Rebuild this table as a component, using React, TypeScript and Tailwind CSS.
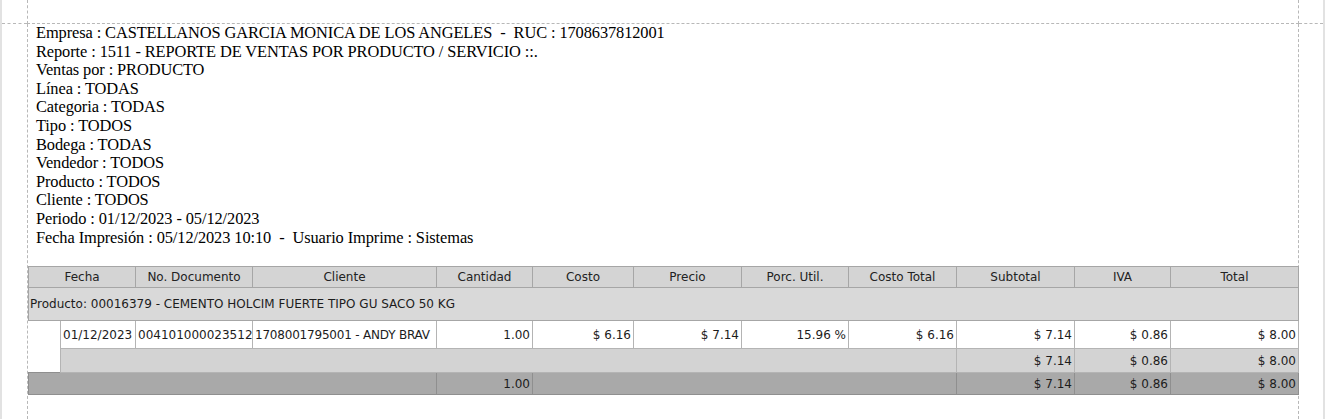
const cols = [32, 75, 117, 184, 96, 101, 108, 107, 108, 118, 96, 128]

const headerLines = [
  'Empresa : CASTELLANOS GARCIA MONICA DE LOS ANGELES  -  RUC : 1708637812001',
  'Reporte : 1511 - REPORTE DE VENTAS POR PRODUCTO / SERVICIO ::.',
  'Ventas por : PRODUCTO',
  'Línea : TODAS',
  'Categoria : TODAS',
  'Tipo : TODOS',
  'Bodega : TODAS',
  'Vendedor : TODOS',
  'Producto : TODOS',
  'Cliente : TODOS',
  'Periodo : 01/12/2023 - 05/12/2023',
  'Fecha Impresión : 05/12/2023 10:10  -  Usuario Imprime : Sistemas',
]

const headers = ['No. Documento', 'Cliente', 'Cantidad', 'Costo', 'Precio', 'Porc. Util.', 'Costo Total', 'Subtotal', 'IVA', 'Total']

const th = 'border border-[#a6a6a6] bg-[#d4d4d4] p-0 text-center font-normal text-[#222]'
const tdNum = 'border border-[#b4b4b4] bg-white px-[2px] py-0 text-right'
const tdText = 'whitespace-nowrap border border-[#b4b4b4] bg-white px-[2px] py-0 text-left'

function ReportHeader() {
  return (
    <div
      className="whitespace-pre pl-[8px] text-[16.4px] leading-[18.6px] tracking-[-0.1px] text-black"
      style={{ fontFamily: '"Liberation Serif", "Times New Roman", serif' }}
    >
      {headerLines.map((l) => (
        <div key={l}>{l}</div>
      ))}
    </div>
  )
}

function ReportTable() {
  return (
    <table
      className="w-[1270px] table-fixed border-collapse text-[12px] text-[#1c1c1c]"
      style={{ fontFamily: '"DejaVu Sans", Tahoma, sans-serif' }}
    >
      <colgroup>
        {cols.map((w, i) => (
          <col key={i} style={{ width: w }} />
        ))}
      </colgroup>
      <tbody>
        <tr className="h-[21px]">
          <td colSpan={2} className={th}>
            Fecha
          </td>
          {headers.map((h) => (
            <td key={h} className={th}>
              {h}
            </td>
          ))}
        </tr>
        <tr className="h-[33px]">
          <td colSpan={12} className="border border-[#a6a6a6] bg-[#d9d9d9] p-0 pl-px text-left">
            Producto: 00016379 - CEMENTO HOLCIM FUERTE TIPO GU SACO 50 KG
          </td>
        </tr>
        <tr className="h-[28px]">
          <td rowSpan={2} className="bg-white p-0" />
          <td className={tdText}>01/12/2023</td>
          <td className={tdText}>004101000023512</td>
          <td className={tdText + ' tracking-[-0.2px]'}>1708001795001 - ANDY BRAV</td>
          <td className={tdNum}>1.00</td>
          <td className={tdNum}>$ 6.16</td>
          <td className={tdNum}>$ 7.14</td>
          <td className={tdNum}>15.96 %</td>
          <td className={tdNum}>$ 6.16</td>
          <td className={tdNum}>$ 7.14</td>
          <td className={tdNum}>$ 0.86</td>
          <td className={tdNum}>$ 8.00</td>
        </tr>
        <tr className="h-[24px] bg-[#d3d3d3]">
          <td colSpan={8} className="border border-[#b4b4b4] p-0" />
          <td className="border border-[#b4b4b4] px-[2px] py-0 text-right">$ 7.14</td>
          <td className="border border-[#b4b4b4] px-[2px] py-0 text-right">$ 0.86</td>
          <td className="border border-[#b4b4b4] px-[2px] py-0 text-right">$ 8.00</td>
        </tr>
        <tr className="h-[22px] bg-[#a9a9a9]">
          <td colSpan={4} className="border border-[#8f8f8f] p-0" />
          <td className="border border-[#8f8f8f] px-[2px] py-0 text-right">1.00</td>
          <td colSpan={4} className="border border-[#8f8f8f] p-0" />
          <td className="border border-[#8f8f8f] px-[2px] py-0 text-right">$ 7.14</td>
          <td className="border border-[#8f8f8f] px-[2px] py-0 text-right">$ 0.86</td>
          <td className="border border-[#8f8f8f] px-[2px] py-0 text-right">$ 8.00</td>
        </tr>
      </tbody>
    </table>
  )
}

export default function App() {
  return (
    <div className="flex h-[419px] w-[1325px] overflow-hidden bg-white">
      <div className="w-[2px] shrink-0 bg-[#e2e2e2]" />
      <div className="grid flex-1 grid-cols-[25px_1272px_24px] grid-rows-[24px_1fr]">
        <div className="border-b border-dashed border-[#b8b8b8]" />
        <div className="border-x border-b border-dashed border-[#b8b8b8]" />
        <div className="border-b border-dashed border-[#b8b8b8]" />
        <div />
        <div className="flex flex-col border-x border-dashed border-[#b8b8b8]">
          <ReportHeader />
          <div className="mt-[19px]">
            <ReportTable />
          </div>
        </div>
        <div />
      </div>
      <div className="w-[2px] shrink-0 bg-[#e2e2e2]" />
    </div>
  )
}
